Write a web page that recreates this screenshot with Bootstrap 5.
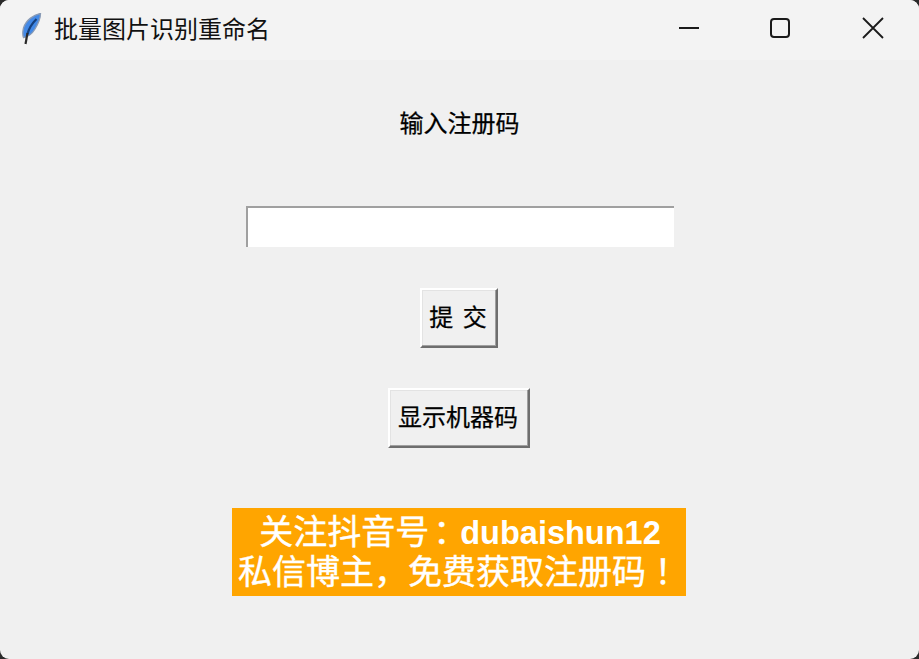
<!DOCTYPE html>
<html lang="zh">
<head>
<meta charset="utf-8">
<title>批量图片识别重命名</title>
<link href="https://cdn.jsdelivr.net/npm/bootstrap@5.3.0/dist/css/bootstrap.min.css" rel="stylesheet">
<style>
html,body{height:100%;margin:0;background:#2a2a2a;overflow:hidden}
body{font-family:"Liberation Sans","Noto Sans CJK SC",sans-serif;color:#000}
.appwin{width:919px;height:659px;background:#f0f0f0;border-radius:9px;overflow:hidden}
.titlebar{height:60px;background:#f3f3f3;padding-left:20px}
.titletxt{font-size:24px;line-height:1;margin-left:10px;color:#111;font-family:"Noto Sans CJK SC",sans-serif;margin-top:-4px}
.winbtns{width:276px;height:56px;margin-top:-4px}
.winbtn{width:92px;height:56px}
.formwrap{height:599px}
.lbl{font-size:24px;line-height:36px;margin-top:44px;font-family:"Noto Sans CJK SC",sans-serif;font-weight:400;color:#000;-webkit-text-stroke:.25px #000}
.regin{width:428px;height:41px;margin-top:66px;background:#fff;border:0;border-top:2px solid #a0a0a0;border-left:2px solid #a0a0a0;border-radius:0;outline:0;padding:0}
.tkbtn{height:60px;background:#f0f0f0;border:2px solid;border-color:#fff #6e6e6e #6e6e6e #fff;box-shadow:inset -1px -1px 0 #a0a0a0,inset 1px 1px 0 #e3e3e3;border-radius:0;font-size:24px;line-height:1;color:#000;padding:0 0 4px;font-family:"Noto Sans CJK SC",sans-serif;font-weight:400;-webkit-text-stroke:.25px #000}
.btnsub{width:78px;margin-top:41px;margin-left:-1px;word-spacing:4px;padding-right:2px}
.btnshow{width:142px;margin-top:40px;margin-left:-1px;padding-right:2px}
.promo{width:454px;height:88px;margin-top:60px;margin-left:-1px;background:#ffa500;color:#fff;font-size:34px;line-height:44px;text-align:center;font-family:"Noto Sans CJK SC",sans-serif;font-weight:400;-webkit-text-stroke:.4px #fff}
.promolat{font-family:"Liberation Sans",sans-serif;font-weight:700;font-size:32.5px;-webkit-text-stroke:0;margin-left:-3px}
.promocolon{margin-left:4px;margin-right:-4px}
.promopunct{font-family:"Noto Sans CJK TC",sans-serif}
.promoline{white-space:nowrap;height:44px}
.promoline-a{padding-left:2px}
.promoline-b{height:36px;line-height:36px}
</style>
</head>
<body>
<div class="appwin d-flex flex-column">
  <div class="titlebar d-flex align-items-center justify-content-between">
    <div class="d-flex align-items-center">
      <svg width="24" height="34" viewBox="0 0 24 34" aria-hidden="true">
        <path d="M20.500 .5C14 1.500 6 7 3.500 15c-1 4-1 7 0 9.500 4.500-.5 8.500-3.500 11.500-8.500 3-5 5.500-10 5.500-15.500z" fill="#4389e6" stroke="#8a9bb5" stroke-width="1.300"/>
        <path d="M16.500 6c-4 4-7.500 9-9 15" fill="none" stroke="#16407c" stroke-width="2.200"/>
        <path d="M7.500 20L5.500 31" fill="none" stroke="#2a2a2a" stroke-width="2.200"/>
      </svg>
      <span class="titletxt">批量图片识别重命名</span>
    </div>
    <div class="winbtns d-flex">
      <div class="winbtn d-flex align-items-center justify-content-center">
        <svg width="22" height="22" viewBox="0 0 22 22" aria-hidden="true"><path d="M1 11h20" stroke="#1a1a1a" stroke-width="2"/></svg>
      </div>
      <div class="winbtn d-flex align-items-center justify-content-center">
        <svg width="22" height="22" viewBox="0 0 22 22" aria-hidden="true"><rect x="1" y="2" width="18" height="18" rx="3" fill="none" stroke="#1a1a1a" stroke-width="2"/></svg>
      </div>
      <div class="winbtn d-flex align-items-center justify-content-center">
        <svg width="22" height="22" viewBox="0 0 22 22" aria-hidden="true"><path d="M1 1l20 20M21 1L1 21" stroke="#1a1a1a" stroke-width="1.800"/></svg>
      </div>
    </div>
  </div>
  <div class="formwrap d-flex flex-column align-items-center">
    <label class="lbl" for="regcode">输入注册码</label>
    <input id="regcode" class="regin" type="text">
    <button class="tkbtn btnsub" type="button">提 交</button>
    <button class="tkbtn btnshow" type="button">显示机器码</button>
    <div class="promo">
      <div class="promoline promoline-a">关注抖音号<span class="promocolon">：</span><span class="promolat">dubaishun12</span></div>
      <div class="promoline promoline-b">私信博主，免费获取注册码<span class="promopunct" lang="zh-Hant">！</span></div>
    </div>
  </div>
</div>
<script src="https://cdn.jsdelivr.net/npm/bootstrap@5.3.0/dist/js/bootstrap.bundle.min.js"></script>
</body>
</html>
